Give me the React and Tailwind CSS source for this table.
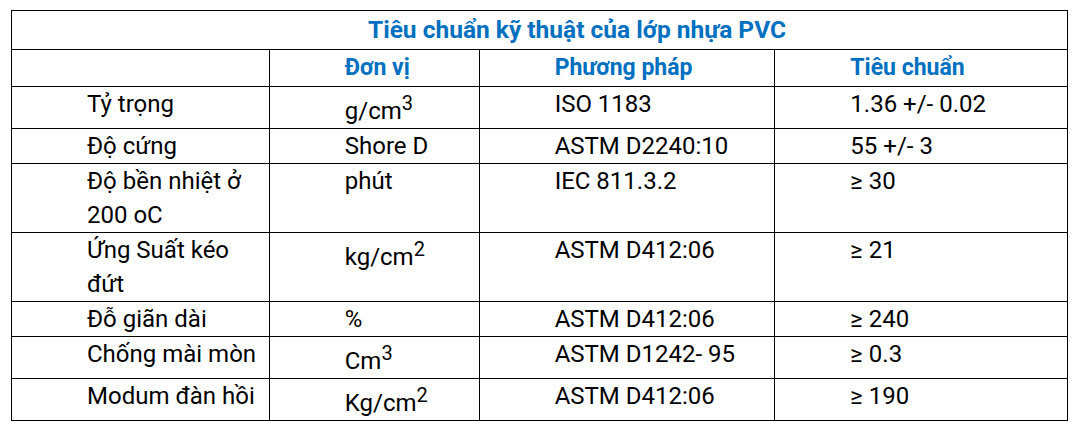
import React from 'react';

const rows = [
  { name: ['Tỷ trọng'], unit: ['g/cm', '3'], method: 'ISO 1183', value: '1.36 +/- 0.02' },
  { name: ['Độ cứng'], unit: ['Shore D'], method: 'ASTM D2240:10', value: '55 +/- 3' },
  { name: ['Độ bền nhiệt ở', '200 oC'], unit: ['phút'], method: 'IEC 811.3.2', value: '≥ 30' },
  { name: ['Ứng Suất kéo', 'đứt'], unit: ['kg/cm', '2'], method: 'ASTM D412:06', value: '≥ 21' },
  { name: ['Đỗ giãn dài'], unit: ['%'], method: 'ASTM D412:06', value: '≥ 240' },
  { name: ['Chống mài mòn'], unit: ['Cm', '3'], method: 'ASTM D1242- 95', value: '≥ 0.3' },
  { name: ['Modum đàn hồi'], unit: ['Kg/cm', '2'], method: 'ASTM D412:06', value: '≥ 190' },
];

function Unit({ parts }) {
  const [base, sup] = parts;
  return (
    <span>
      {base}
      {sup && <span className="align-super text-[20px] leading-[33px]">{sup}</span>}
    </span>
  );
}

export default function App() {
  const cell = 'border border-black pl-[75px] pr-2 py-0 align-top text-left';
  const head = 'border border-black pl-[75px] pr-2 align-middle text-left text-[23px] font-bold text-[#0070c0]';
  return (
    <div className="w-[1076px] h-[434px] bg-white pt-[10px] pl-[11px]" style={{ fontFamily: 'Roboto, "Noto Sans", sans-serif' }}>
      <table className="w-[1057px] border-collapse text-[24px] leading-[34px] text-black">
        <colgroup>
          <col className="w-[258px]" />
          <col className="w-[210px]" />
          <col className="w-[296px]" />
          <col className="w-[293px]" />
        </colgroup>
        <thead>
          <tr className="h-[39px]">
            <th colSpan={4} className="border border-black pl-[75px] align-middle text-center text-[24.5px] font-bold text-[#0070c0]">
              Tiêu chuẩn kỹ thuật của lớp nhựa PVC
            </th>
          </tr>
          <tr className="h-[37px]">
            <th className={head}></th>
            <th className={head}>Đơn vị</th>
            <th className={head}>Phương pháp</th>
            <th className={head}>Tiêu chuẩn</th>
          </tr>
        </thead>
        <tbody>
          {rows.map((r, i) => (
            <tr key={i}>
              <td className={cell}>
                {r.name.map((l, j) => <div key={j}>{l}</div>)}
              </td>
              <td className={cell}><Unit parts={r.unit} /></td>
              <td className={cell}>{r.method}</td>
              <td className={cell}>{r.value}</td>
            </tr>
          ))}
        </tbody>
      </table>
    </div>
  );
}
